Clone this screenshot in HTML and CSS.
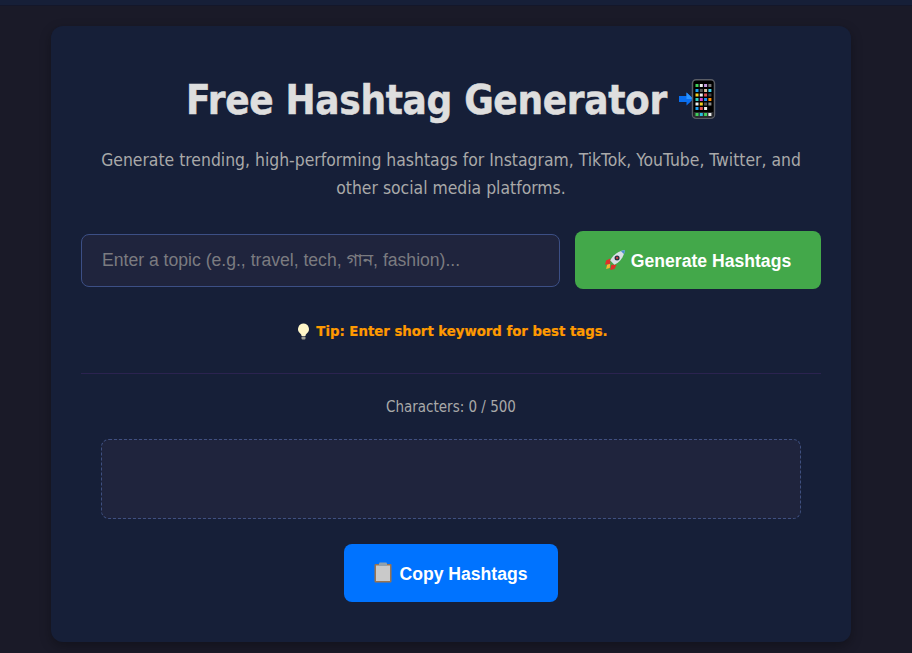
FILE: index.html
```html
<!DOCTYPE html>
<html lang="en">
<head>
<meta charset="utf-8">
<title>Free Hashtag Generator</title>
<link rel="stylesheet" href="styles.css">
</head>
<body>
<div class="topbar"></div>
<main class="page">
  <section class="card">
    <h1 class="title"><span>Free Hashtag Generator</span>
      <svg class="title-icon" width="38" height="40" viewBox="0 0 38 40" aria-hidden="true">
        <path d="M1 17h7.500v-3.500L15.500 20l-7 6.500V23H1z" fill="#0a6ff0"/>
        <path d="M8.500 13.500 15.500 20h-7z" fill="#2a93ff"/>
        <rect x="14.500" y="0.750" width="22" height="38.500" rx="3.500" fill="#000" stroke="#5a5d66" stroke-width="1.500"/>
        <g>
          <rect x="17.500" y="5" width="3" height="3" fill="#3fd05a"/><rect x="21.800" y="5" width="3" height="3" fill="#eee"/><rect x="26.100" y="5" width="3" height="3" fill="#c59be0"/><rect x="30.400" y="5" width="3" height="3" fill="#777"/>
          <rect x="17.500" y="10" width="3" height="3" fill="#1da1f2"/><rect x="21.800" y="10" width="3" height="3" fill="#555"/><rect x="26.100" y="10" width="3" height="3" fill="#d8c0a0"/><rect x="30.400" y="10" width="3" height="3" fill="#3dd0ea"/>
          <rect x="17.500" y="14.500" width="3" height="3" fill="#f5d020"/><rect x="21.800" y="14.500" width="3" height="3" fill="#eee"/><rect x="26.100" y="14.500" width="3" height="3" fill="#e05050"/><rect x="30.400" y="14.500" width="3" height="3" fill="#444"/>
          <rect x="17.500" y="19" width="3" height="3" fill="#30d0c0"/><rect x="21.800" y="19" width="3" height="3" fill="#d040d0"/><rect x="26.100" y="19" width="3" height="3" fill="#1a90f0"/><rect x="30.400" y="19" width="3" height="3" fill="#ff8c00"/>
          <rect x="17.500" y="23.500" width="3" height="3" fill="#eee"/><rect x="21.800" y="23.500" width="3" height="3" fill="#f5d020"/><rect x="26.100" y="23.500" width="3" height="3" fill="#555"/><rect x="30.400" y="23.500" width="3" height="3" fill="#888"/>
          <rect x="17.500" y="28" width="3" height="3" fill="#1da1f2"/><rect x="21.800" y="28" width="3" height="3" fill="#e05050"/><rect x="26.100" y="28" width="3" height="3" fill="#eee"/>
          <rect x="15.500" y="33" width="20" height="5" fill="#2a2c30"/>
          <rect x="17.500" y="34" width="3" height="3" fill="#3fd05a"/><rect x="21.800" y="34" width="3" height="3" fill="#2ac0e0"/><rect x="26.100" y="34" width="3" height="3" fill="#3fd05a"/><rect x="30.400" y="34" width="3" height="3" fill="#eee"/>
        </g>
      </svg>
    </h1>
    <p class="subtitle">Generate trending, high-performing hashtags for Instagram, TikTok, YouTube, Twitter, and other social media platforms.</p>
    <div class="controls">
      <input class="topic" type="text" placeholder="Enter a topic (e.g., travel, tech, গান, fashion)...">
      <button class="btn btn-green" type="button">
        <svg class="btn-icon" width="21" height="21" viewBox="0 0 20 20" aria-hidden="true">
          <path d="M5 9 1 11l-1 4 5-1z" fill="#e0302a"/>
          <path d="M11 15l-2 4-4 1 1-5z" fill="#e0302a"/>
          <path d="M5 14l-3 1-1 4 3.500-1z" fill="#f7b733"/>
          <path d="M5 11C8 5 13 2 19 1c-1 6-4 11-10 14z" fill="#d8dfe6"/>
          <path d="M15 1.800 19 1l-.8 4z" fill="#4b8fd0"/>
          <circle cx="11.500" cy="8.500" r="2.400" fill="#2a3340"/>
          <circle cx="11.500" cy="8.500" r="1.100" fill="#d04040"/>
        </svg>
        <span>Generate Hashtags</span>
      </button>
    </div>
    <p class="tip">
      <svg class="tip-icon" width="13" height="17" viewBox="0 0 12 17" aria-hidden="true">
        <path d="M6 0.500a5.500 5.500 0 0 1 3.500 9.700C8.500 11 8 12 8 13H4c0-1-.5-2-1.500-2.800A5.500 5.500 0 0 1 6 .5z" fill="#fff6c8"/>
        <rect x="4" y="13.500" width="4" height="3" rx="1" fill="#9a9a90"/>
      </svg>
      <strong>Tip: Enter short keyword for best tags.</strong>
    </p>
    <hr class="rule">
    <p class="count">Characters: 0 / 500</p>
    <div class="output"></div>
    <div class="copy-row">
      <button class="btn btn-blue" type="button">
        <svg class="btn-icon btn-icon-copy" width="18" height="21" viewBox="0 0 18 21" aria-hidden="true">
          <rect x="0.500" y="2" width="17" height="18.500" rx="1" fill="#9a7450"/>
          <rect x="2" y="3.500" width="14" height="15.500" fill="#c9c9c9"/>
          <rect x="5" y="0.500" width="8" height="3.500" rx="1" fill="#8fa0ad"/>
        </svg>
        <span>Copy Hashtags</span>
      </button>
    </div>
  </section>
</main>
</body>
</html>
```
FILE: styles.css
```css
* { box-sizing: border-box; }
html, body { margin: 0; height: 100%; }
body {
  background: #1a1a28;
  font-family: "DejaVu Sans Condensed", "DejaVu Sans", sans-serif;
  overflow: hidden;
}
.topbar { height: 6px; background: #161f38; border-bottom: 1px solid #14172a; }
.page { padding: 20px 10px 0 0; }
.card {
  width: 800px;
  height: 616px;
  margin: 0 auto;
  padding: 30px;
  background: #161f38;
  border-radius: 12px;
  box-shadow: 0 4px 12px rgba(0, 0, 0, 0.3);
  text-align: center;
}
.title {
  margin: 17px 0 0;
  height: 54px;
  display: flex;
  justify-content: center;
  align-items: center;
  gap: 11px;
  font-size: 40px;
  font-weight: 700;
  line-height: 54px;
  letter-spacing: -0.33px;
  color: #dedede;
  -webkit-text-stroke: 0.5px #dedede;
}
.title-icon { flex: none; margin-top: -3px; }
.subtitle {
  margin: 19px auto 0;
  width: 730px;
  font-size: 17.4px;
  line-height: 28px;
  color: #a9a9a9;
}
.controls { display: flex; align-items: center; gap: 15px; margin-top: 29px; }
.topic {
  width: 479px;
  height: 53px;
  padding: 0 20px;
  background: #1f243d;
  border: 1px solid #3c4f85;
  border-radius: 8px;
  color: #e0e0e0;
  font: 17.6px "Liberation Sans", "Noto Sans Bengali", "Noto Sans", sans-serif;
  outline: none;
}
.topic::placeholder { color: #7b7b80; opacity: 1; }
.btn {
  display: inline-flex;
  align-items: center;
  justify-content: center;
  gap: 5px;
  height: 58px;
  padding-top: 4px;
  border: 0;
  border-radius: 8px;
  color: #fff;
  font: 700 17.6px "Liberation Sans", sans-serif;
}
.btn-green { width: 246px; background: #43a84a; }
.btn-blue { width: 214px; background: #0073ff; }
.btn-icon { flex: none; margin-top: -4px; }
.btn-icon-copy { margin-right: 2px; }
.tip {
  margin: 32px 0 0;
  padding-left: 3px;
  height: 20px;
  display: flex;
  justify-content: center;
  align-items: center;
  gap: 6px;
  font-size: 14.75px;
  line-height: 20px;
  color: #ff9a00;
  -webkit-text-stroke: 0.2px #ff9a00;
}
.rule { margin: 32px 0 0; border: 0; border-top: 1px solid #2b2350; }
.count { margin: 23px 0 0; font-size: 15px; line-height: 20px; color: #a9a9a9; }
.output {
  width: 700px;
  height: 80px;
  margin: 22px auto 0;
  background: #1f243d;
  border: 1px dashed #3f5080;
  border-radius: 8px;
}
.copy-row { margin-top: 25px; }
```
